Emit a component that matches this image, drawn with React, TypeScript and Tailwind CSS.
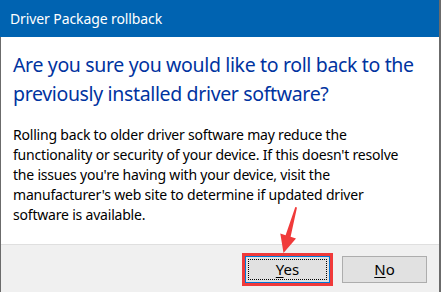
import React from "react";

const font = { fontFamily: '"Noto Sans", "Open Sans", sans-serif' };

export default function App() {
  return (
    <div
      className="relative w-[441px] h-[292px] overflow-hidden bg-white flex"
      style={font}
    >
      <div className="flex flex-col flex-1">
        <div className="h-[37px] bg-[#0063B1] flex items-center pl-[10px] text-white text-[14px] tracking-[-0.1px] leading-none">
          Driver Package rollback
        </div>
        <div className="flex-1 flex flex-col border-l border-[#6b6b6b]">
          <div className="flex-1 px-[12px]">
            <div className="pt-[13px] text-[#0033A0] text-[19.5px] leading-[29px] tracking-[-0.35px] whitespace-nowrap">
              Are you sure you would like to roll back to the
              <br />
              previously installed driver software?
            </div>
            <div className="pt-[17px] text-[14px] leading-[20px] text-black tracking-[-0.2px] whitespace-nowrap">
              Rolling back to older driver software may reduce the
              <br />
              functionality or security of your device. If this doesn't resolve
              <br />
              the issues you're having with your device, visit the
              <br />
              manufacturer's web site to determine if updated driver
              <br />
              software is available.
            </div>
          </div>
          <div className="h-[48px] bg-[#F0F0F0] border-t border-[#DFDFDF] flex justify-end items-start pt-[11px] pr-[12px] gap-[12px]">
            <div className="relative w-[85px] h-[27px]">
              <div className="absolute inset-0 bg-[#E1E1E1] border border-[#0078D7] flex items-center justify-center text-[15px] text-black">
                <div className="absolute inset-[2px] border border-dotted border-black" />
                <span className="relative">
                  <span className="underline underline-offset-2">Y</span>es
                </span>
              </div>
              <div className="absolute -inset-[3px] border-[3px] border-[#F03A3A]" />
            </div>
            <div className="w-[85px] h-[27px] bg-[#E1E1E1] border border-[#ADADAD] flex items-center justify-center text-[15px] text-black">
              <span>
                <span className="underline underline-offset-2">N</span>o
              </span>
            </div>
          </div>
        </div>
      </div>
      <div className="w-[2px] bg-[#6b6b6b]" />
      <svg
        className="absolute left-0 top-0 pointer-events-none"
        width="441"
        height="292"
        viewBox="0 0 441 292"
      >
        <polygon
          points="295.3,207 297,207.5 290.6,236.7 296,238.4 283.5,253 280.3,233.6 285.6,235.2"
          fill="#F03A3A"
        />
      </svg>
    </div>
  );
}
